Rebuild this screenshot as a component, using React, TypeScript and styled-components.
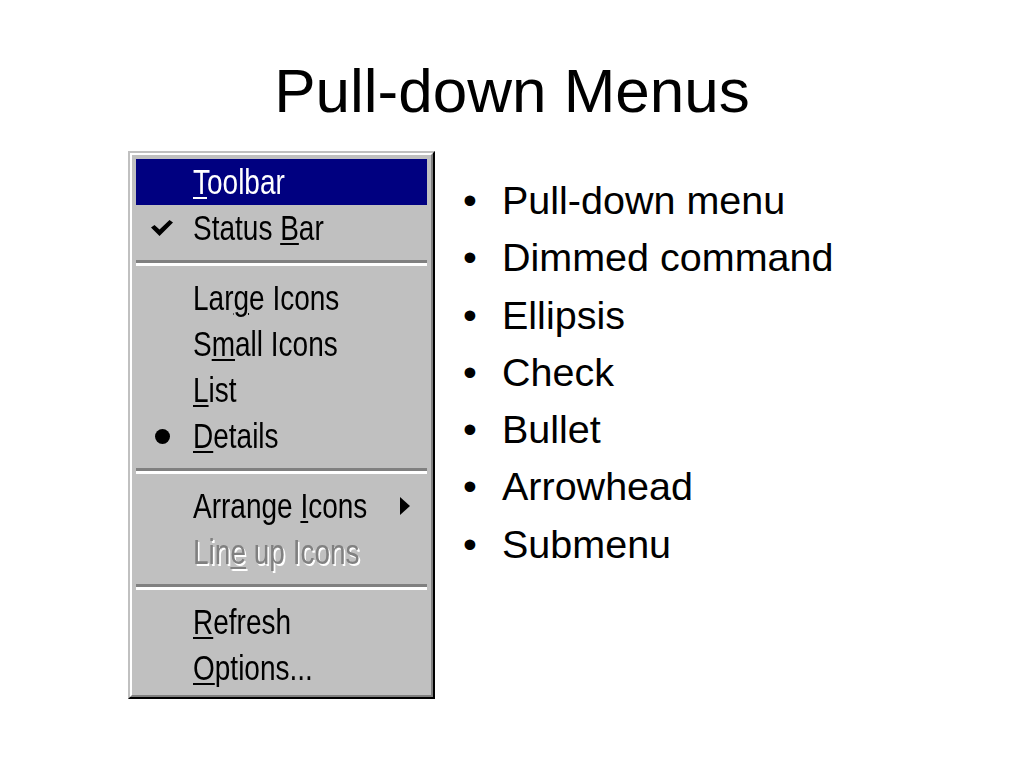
import React from 'react';
import styled, { createGlobalStyle } from 'styled-components';

const GlobalStyle = createGlobalStyle`
    html, body {
        margin: 0;
        padding: 0;
        background: #ffffff;
    }
    body {
        font-family: "Liberation Sans", Arial, sans-serif;
        color: #000000;
    }
`;

const Page = styled.div`
    width: 1024px;
    height: 768px;
    background: #ffffff;
    overflow: hidden;
`;

const Title = styled.h1`
    margin: 0;
    padding-top: 55px;
    font-size: 62px;
    font-weight: 400;
    line-height: 71px;
    text-align: center;
`;

const Content = styled.div`
    display: flex;
    align-items: flex-start;
    gap: 28px;
    padding-left: 128px;
    margin-top: 25px;
`;

const Menu = styled.div`
    width: 307px;
    box-sizing: border-box;
    background: #c0c0c0;
    border-style: solid;
    border-width: 2px;
    border-color: #c0c0c0 #000000 #000000 #c0c0c0;
`;

const MenuInner = styled.div`
    border-style: solid;
    border-width: 2px;
    border-color: #ffffff #808080 #808080 #ffffff;
    padding: 4px;
`;

const Item = styled.div<{ $active?: boolean }>`
    display: flex;
    align-items: center;
    height: 46px;
    background: ${p => (p.$active ? '#000080' : 'transparent')};
    color: ${p => (p.$active ? '#ffffff' : '#000000')};
`;

const Mark = styled.div`
    width: 52px;
    height: 46px;
    flex: none;
    display: flex;
    align-items: center;
    justify-content: center;
    margin-right: 5px;
`;

const Label = styled.span<{ $dimmed?: boolean }>`
    display: inline-block;
    min-width: 0;
    flex: 0 1 auto;
    font-size: 35px;
    line-height: 42px;
    padding-bottom: 2px;
    margin-top: 2px;
    white-space: nowrap;
    transform: scaleX(0.8);
    transform-origin: left center;
    color: ${p => (p.$dimmed ? '#808080' : 'inherit')};
    text-shadow: ${p => (p.$dimmed ? '2px 2px 0 #ffffff' : 'none')};
`;

const Key = styled.span`
    text-decoration: underline;
    text-decoration-thickness: 2px;
    text-underline-offset: 3px;
`;

const Arrow = styled.div`
    margin-left: auto;
    margin-right: 17px;
    flex: none;
    display: flex;
    align-items: center;
`;

const Separator = styled.div`
    height: 24px;
    display: flex;
    flex-direction: column;
    justify-content: center;

    &::before {
        content: '';
        display: block;
        height: 3px;
        background: #808080;
    }
    &::after {
        content: '';
        display: block;
        height: 3px;
        background: #ffffff;
    }
`;

const BulletList = styled.ul`
    list-style: none;
    margin: 0;
    padding: 21px 0 0 0;
`;

const BulletItem = styled.li`
    display: flex;
    font-size: 39.5px;
    line-height: 57.3px;
    white-space: nowrap;
`;

const BulletGlyph = styled.span`
    width: 39px;
    flex: none;
`;

const Check = () => (
    <svg width="22" height="16" viewBox="0 0 22 16">
        <path d="M0 7.5 L3.5 5 L8.5 9.5 L18.5 0 L22 2.5 L8.5 16 Z" fill="#000" />
    </svg>
);

const Dot = () => (
    <svg width="15" height="15" viewBox="0 0 15 15">
        <circle cx="7.5" cy="7.5" r="7.5" fill="#000" />
    </svg>
);

const Triangle = () => (
    <svg width="10" height="18" viewBox="0 0 10 18">
        <path d="M0 0 L10 9 L0 18 Z" fill="#000" />
    </svg>
);

const points = [
    'Pull-down menu',
    'Dimmed command',
    'Ellipsis',
    'Check',
    'Bullet',
    'Arrowhead',
    'Submenu',
];

const App: React.FC = () => {
    return (
        <Page>
            <GlobalStyle />
            <Title>Pull-down Menus</Title>
            <Content>
                <Menu>
                    <MenuInner>
                        <Item $active>
                            <Mark />
                            <Label><Key>T</Key>oolbar</Label>
                        </Item>
                        <Item>
                            <Mark><Check /></Mark>
                            <Label>Status <Key>B</Key>ar</Label>
                        </Item>
                        <Separator />
                        <Item>
                            <Mark />
                            <Label>Lar<Key>g</Key>e Icons</Label>
                        </Item>
                        <Item>
                            <Mark />
                            <Label>S<Key>m</Key>all Icons</Label>
                        </Item>
                        <Item>
                            <Mark />
                            <Label><Key>L</Key>ist</Label>
                        </Item>
                        <Item>
                            <Mark><Dot /></Mark>
                            <Label><Key>D</Key>etails</Label>
                        </Item>
                        <Separator />
                        <Item>
                            <Mark />
                            <Label>Arrange <Key>I</Key>cons</Label>
                            <Arrow><Triangle /></Arrow>
                        </Item>
                        <Item>
                            <Mark />
                            <Label $dimmed>Lin<Key>e</Key> up Icons</Label>
                        </Item>
                        <Separator />
                        <Item>
                            <Mark />
                            <Label><Key>R</Key>efresh</Label>
                        </Item>
                        <Item>
                            <Mark />
                            <Label><Key>O</Key>ptions...</Label>
                        </Item>
                    </MenuInner>
                </Menu>
                <BulletList>
                    {points.map(p => (
                        <BulletItem key={p}>
                            <BulletGlyph>•</BulletGlyph>
                            {p}
                        </BulletItem>
                    ))}
                </BulletList>
            </Content>
        </Page>
    );
};

export default App;
